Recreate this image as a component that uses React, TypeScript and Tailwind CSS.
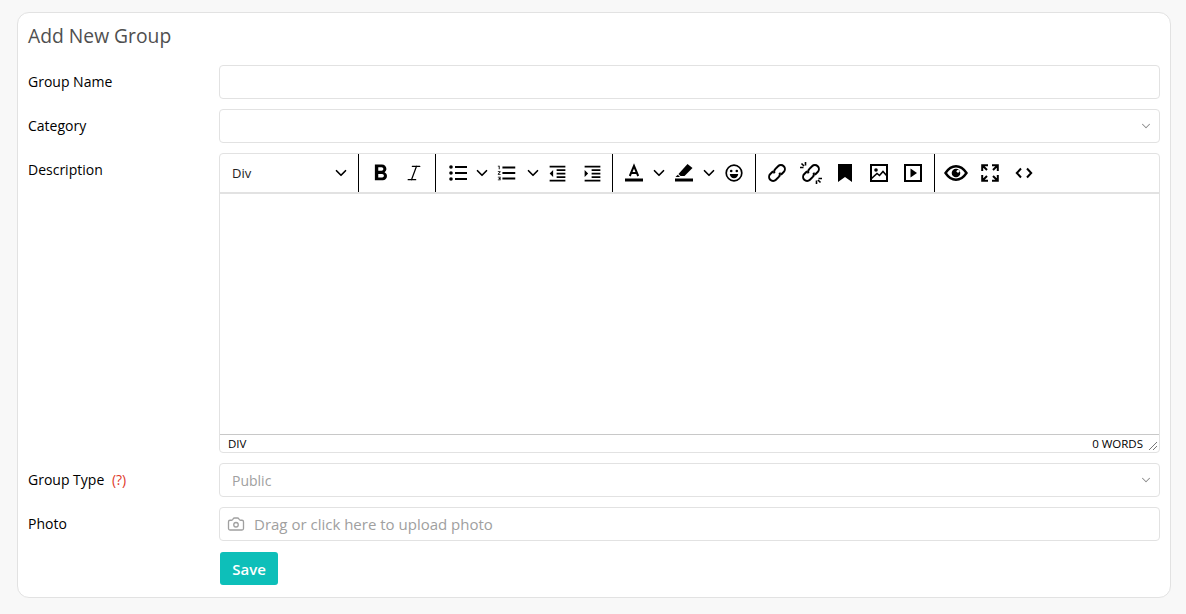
import { Camera, ChevronDown, Italic } from 'lucide-react';
import { MdFormatBold, MdFormatIndentDecrease, MdFormatIndentIncrease, MdFormatListNumbered } from 'react-icons/md';
import type { ReactNode } from 'react';

function Row({ label, children }: { label: ReactNode; children: ReactNode }) {
    return (
        <div className="flex">
            <label className="w-[191px] shrink-0 pt-[6px] text-[14px] leading-[22px] font-medium text-black">{label}</label>
            <div className="flex-1 min-w-0">{children}</div>
        </div>
    );
}

function SelectBox({ value }: { value?: string }) {
    return (
        <div className="h-[34px] flex items-center justify-between pl-[12px] pr-[6px] border border-[#e2e2e2] rounded-[4px] bg-white text-[14px] text-[#a0a0a0]">
            <span>{value}</span>
            <ChevronDown size={14} strokeWidth={1.75} className="text-[#8a8a8a]" />
        </div>
    );
}

function Caret() {
    return <ChevronDown size={18} strokeWidth={2.25} className="text-black shrink-0" />;
}

function Btn({ w = 'w-[34px]', children }: { w?: string; children: ReactNode }) {
    return <div className={`${w} h-full flex items-center justify-center shrink-0 text-black`}>{children}</div>;
}

function Sep() {
    return <div className="w-px h-full bg-black shrink-0" />;
}

function ChainPaths() {
    return (
        <g transform="rotate(-45 10 10)" fill="none" stroke="#000" strokeWidth="2">
            <path d="M8.500 6H4.500a4 4 0 0 0 0 8h4a4 4 0 0 0 3.600-2.500" />
            <path d="M11.500 14h4a4 4 0 0 0 0-8h-4a4 4 0 0 0-3.600 2.500" />
        </g>
    );
}

function Toolbar() {
    return (
        <div className="h-[40px] flex border-b-2 border-[#e2e2e2]">
            <div className="w-[138px] shrink-0 flex items-center justify-between pl-[12px] pr-[8px] text-[13px] text-[#222]">
                <span className="pt-[2px]">Div</span>
                <Caret />
            </div>
            <Sep />
            <div className="flex px-[4px]">
                <Btn><MdFormatBold size={27} /></Btn>
                <Btn><Italic size={20} strokeWidth={1.5} /></Btn>
            </div>
            <Sep />
            <div className="flex pl-[4px] pr-[3px]">
                <Btn w="w-[36px]">
                    <svg width="18" height="16" viewBox="0 0 18 16" fill="#000">
                        <circle cx="2" cy="2" r="1.800" />
                        <circle cx="2" cy="8" r="1.800" />
                        <circle cx="2" cy="14" r="1.800" />
                        <rect x="6" y="1" width="12" height="2" />
                        <rect x="6" y="7" width="12" height="2" />
                        <rect x="6" y="13" width="12" height="2" />
                    </svg>
                </Btn>
                <Btn w="w-[12px]"><Caret /></Btn>
                <Btn w="w-[38px]"><MdFormatListNumbered size={22} /></Btn>
                <Btn w="w-[13px]"><Caret /></Btn>
                <Btn w="w-[36px]"><MdFormatIndentDecrease size={21} /></Btn>
                <Btn w="w-[34px]"><MdFormatIndentIncrease size={21} /></Btn>
            </div>
            <Sep />
            <div className="flex pl-[3px] pr-[3px]">
                <Btn w="w-[36px]">
                    <svg width="20" height="20" viewBox="0 0 20 20">
                        <path d="M5.800 13 10 2.800 14.200 13M7.200 10h5.600" fill="none" stroke="#000" strokeWidth="2" />
                        <rect x="1" y="15.500" width="18" height="3" fill="#000" />
                    </svg>
                </Btn>
                <Btn w="w-[14px]"><Caret /></Btn>
                <Btn w="w-[36px]">
                    <svg width="20" height="20" viewBox="0 0 20 20">
                        <path d="M13.500 1 18.500 5 10.500 13H6.500L4.500 11z" fill="#000" />
                        <path d="M3.800 11.800 6 14H1.500z" fill="#000" />
                        <rect x="1" y="15.500" width="18" height="3" fill="#000" />
                    </svg>
                </Btn>
                <Btn w="w-[14px]"><Caret /></Btn>
                <Btn w="w-[36px]">
                    <svg width="18" height="18" viewBox="0 0 18 18">
                        <circle cx="9" cy="9" r="7.800" fill="none" stroke="#000" strokeWidth="1.700" />
                        <circle cx="6.200" cy="7" r="1.300" fill="#000" />
                        <circle cx="11.800" cy="7" r="1.300" fill="#000" />
                        <path d="M4.800 10h8.400a4.200 4.200 0 0 1-8.400 0z" fill="#000" />
                    </svg>
                </Btn>
            </div>
            <Sep />
            <div className="flex px-[4px]">
                <Btn>
                    <svg width="20" height="20" viewBox="0 0 20 20"><ChainPaths /></svg>
                </Btn>
                <Btn>
                    <svg width="22" height="22" viewBox="0 0 22 22">
                        <g transform="translate(1 1)"><ChainPaths /></g>
                        <path d="M5.500 0v3.500M0 5.500h3.500M1.500 1.500l2.500 2.500M16.500 22v-3.500M22 16.500h-3.500M20.500 20.500 18 18" fill="none" stroke="#000" strokeWidth="1.600" />
                    </svg>
                </Btn>
                <Btn>
                    <svg width="14" height="18" viewBox="0 0 14 18"><path d="M0 0h14v18l-7-5-7 5z" fill="#000" /></svg>
                </Btn>
                <Btn>
                    <svg width="18" height="18" viewBox="0 0 18 18">
                        <rect x="1" y="1" width="16" height="16" fill="none" stroke="#000" strokeWidth="2" />
                        <circle cx="6" cy="6" r="1.800" fill="#000" />
                        <path d="M1.500 14.500 7 9.500l2.500 2L13 7.500l4 4.500" fill="none" stroke="#000" strokeWidth="1.600" />
                    </svg>
                </Btn>
                <Btn>
                    <svg width="18" height="18" viewBox="0 0 18 18">
                        <rect x="1" y="1" width="16" height="16" fill="none" stroke="#000" strokeWidth="2" />
                        <path d="M6.500 4.500 13 9l-6.500 4.500z" fill="#000" />
                    </svg>
                </Btn>
            </div>
            <Sep />
            <div className="flex px-[4px]">
                <Btn>
                    <svg width="24" height="16" viewBox="0 0 24 16">
                        <path d="M1.500 8C4.500 3.500 8 1.300 12 1.300S19.500 3.500 22.500 8C19.500 12.500 16 14.700 12 14.700S4.500 12.500 1.500 8z" fill="none" stroke="#000" strokeWidth="2.400" />
                        <circle cx="12" cy="8" r="4.300" fill="#000" />
                        <circle cx="14" cy="6.300" r="1.400" fill="#fff" />
                    </svg>
                </Btn>
                <Btn>
                    <svg width="18" height="18" viewBox="0 0 18 18" fill="none" stroke="#000" strokeWidth="2">
                        <path d="M1.200 7V1.200H7M2 2l4 4M16.800 7V1.200H11M16 2l-4 4M1.200 11v5.800H7M2 16l4-4M16.800 11v5.800H11M16 16l-4-4" />
                    </svg>
                </Btn>
                <Btn>
                    <svg width="18" height="18" viewBox="0 0 18 18" fill="none" stroke="#000" strokeWidth="2">
                        <path d="M6 4.500 1.800 9 6 13.500M12 4.500 16.200 9 12 13.500" />
                    </svg>
                </Btn>
            </div>
        </div>
    );
}

function Editor() {
    return (
        <div className="h-[300px] flex flex-col border border-[#e2e2e2] rounded-[4px] bg-white overflow-hidden">
            <Toolbar />
            <div className="flex-1" />
            <div className="h-[18px] flex items-center justify-between border-t border-[#c8c8c8] pl-[8px] pr-[16px] text-[11.500px] text-black relative">
                <span>DIV</span>
                <span>0 WORDS</span>
                <svg className="absolute right-[1px] bottom-[1px]" width="10" height="10" viewBox="0 0 10 10" fill="none" stroke="#777" strokeWidth="1">
                    <path d="M1 9 9 1M5 9 9 5" />
                </svg>
            </div>
        </div>
    );
}

export default function App() {
    return (
        <div className="h-[614px] bg-[#f8f8f8] pt-[12px] pl-[17px] pr-[15px] [font-family:'Open_Sans',sans-serif]">
            <div className="h-[586px] bg-white border border-[#e2e2e2] rounded-[12px] px-[10px] pt-[8px]">
                <h1 className="text-[19.300px] leading-[30px] font-medium text-[#4f4f4f] mb-[14px]">Add New Group</h1>
                <div className="flex flex-col gap-[10px]">
                    <Row label="Group Name">
                        <div className="h-[34px] border border-[#e2e2e2] rounded-[4px] bg-white" />
                    </Row>
                    <Row label="Category">
                        <SelectBox />
                    </Row>
                    <Row label="Description">
                        <Editor />
                    </Row>
                    <Row
                        label={
                            <>
                                Group Type <span className="ml-[4px] text-[14px] font-normal text-[#e0392b]">(?)</span>
                            </>
                        }
                    >
                        <SelectBox value="Public" />
                    </Row>
                    <Row label="Photo">
                        <div className="h-[34px] flex items-center gap-[9px] pl-[7px] border border-[#e2e2e2] rounded-[4px] bg-white text-[15px] text-[#a0a0a0]">
                            <Camera size={18} strokeWidth={1.75} />
                            <span>Drag or click here to upload photo</span>
                        </div>
                    </Row>
                    <Row label="">
                        <button className="w-[58px] h-[33px] ml-px mt-px pt-px rounded-[3px] bg-[#0dbfb9] text-white text-[15px] font-semibold">Save</button>
                    </Row>
                </div>
            </div>
        </div>
    );
}
